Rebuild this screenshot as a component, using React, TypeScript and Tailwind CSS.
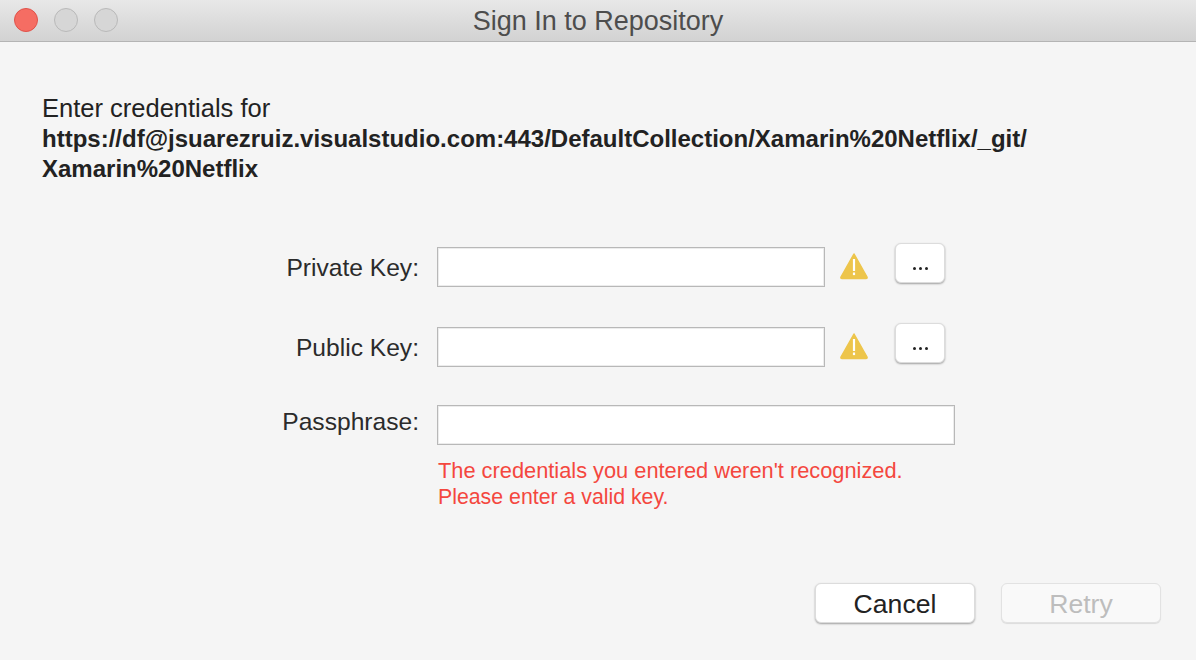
const fieldClass = "h-10 border border-[#b8b8b8] bg-white shadow-[inset_0_0_0_1px_#ececec]";
const labelClass = "w-[419px] text-right text-[24.6px] leading-none text-[#2b2b2b]";

function WarningIcon() {
  return (
    <svg width="30" height="28" viewBox="0 0 30 28" className="shrink-0">
      <path d="M15 2 L28 25 Q28.5 26.5 27 26.5 L3 26.5 Q1.5 26.5 2 25 Z" fill="#edc54b" stroke="#edc54b" strokeWidth="1.5" strokeLinejoin="round" />
      <rect x="13.9" y="7" width="2.2" height="12" fill="#fff" />
      <rect x="13.9" y="20.5" width="2.2" height="2.6" fill="#fff" />
    </svg>
  );
}

function BrowseButton() {
  return (
    <div className="ml-[26px] flex h-10 w-[50px] -translate-y-1 items-end justify-center gap-[3px] rounded-md border border-[#dcdcdc] bg-white pb-3 shadow-[0_1px_2px_rgba(0,0,0,0.35)]">
      <span className="h-[3px] w-[3px] rounded-full bg-[#222]" />
      <span className="h-[3px] w-[3px] rounded-full bg-[#222]" />
      <span className="h-[3px] w-[3px] rounded-full bg-[#222]" />
    </div>
  );
}

function KeyRow({ label }: { label: string }) {
  return (
    <div className="flex h-10 items-center">
      <div className={`${labelClass} pt-1`}>{label}</div>
      <div className="ml-[18px] w-[388px]">
        <div className={fieldClass} />
      </div>
      <div className="ml-[14px] -translate-y-px">
        <WarningIcon />
      </div>
      <BrowseButton />
    </div>
  );
}

export default function App() {
  return (
    <div className="flex h-[660px] w-[1196px] flex-col overflow-hidden bg-[#f5f5f5] font-['Liberation_Sans',Arial,sans-serif]">
      {/* title bar */}
      <div className="relative flex h-[42px] shrink-0 items-center justify-center border-b border-[#b4b4b4] bg-gradient-to-b from-[#e8e8e8] to-[#d2d2d2]">
        <div className="absolute left-[14px] top-[8px] flex gap-4">
          <span className="h-6 w-6 rounded-full border border-[#e0524a] bg-[#f56d63]" />
          <span className="h-6 w-6 rounded-full border border-[#b9b9b9] bg-[#d6d6d6]" />
          <span className="h-6 w-6 rounded-full border border-[#b9b9b9] bg-[#d6d6d6]" />
        </div>
        <span className="pt-0.5 text-[27px] leading-none text-[#4d4d4d]">Sign In to Repository</span>
      </div>

      <div className="flex flex-1 flex-col">
        <div className="px-[42px] pt-[51px] text-[24px] leading-[30.5px] text-[#222]">
          <div className="text-[25.5px]">Enter credentials for</div>
          <div className="font-bold">https://df@jsuarezruiz.visualstudio.com:443/DefaultCollection/Xamarin%20Netflix/_git/</div>
          <div className="font-bold">Xamarin%20Netflix</div>
        </div>

        <div className="mt-[62px] flex flex-col gap-10">
          <KeyRow label="Private Key:" />
          <KeyRow label="Public Key:" />
        </div>

        <div className="mt-[38px] flex h-10 items-start">
          <div className={`${labelClass} pt-[5px]`}>Passphrase:</div>
          <div className={`ml-[18px] w-[518px] ${fieldClass}`} />
        </div>

        <div className="ml-[438px] mt-[13px] text-[21.8px] leading-[26px] text-[#f4473e]">
          <div>The credentials you entered weren't recognized.</div>
          <div className="text-[21.3px]">Please enter a valid key.</div>
        </div>

        <div className="mt-auto flex justify-end gap-[26px] pb-[37px] pr-[35px]">
          <div className="flex h-10 w-40 items-center justify-center rounded-md border border-[#dcdcdc] bg-white pt-1 text-[26.6px] text-[#222] shadow-[0_1px_2px_rgba(0,0,0,0.35)]">
            Cancel
          </div>
          <div className="flex h-10 w-40 items-center justify-center rounded-md border border-[#e2e2e2] bg-[#f9f9f9] pt-1 text-[26.6px] text-[#bdbdbd] shadow-[0_1px_1px_rgba(0,0,0,0.1)]">
            Retry
          </div>
        </div>
      </div>
    </div>
  );
}
